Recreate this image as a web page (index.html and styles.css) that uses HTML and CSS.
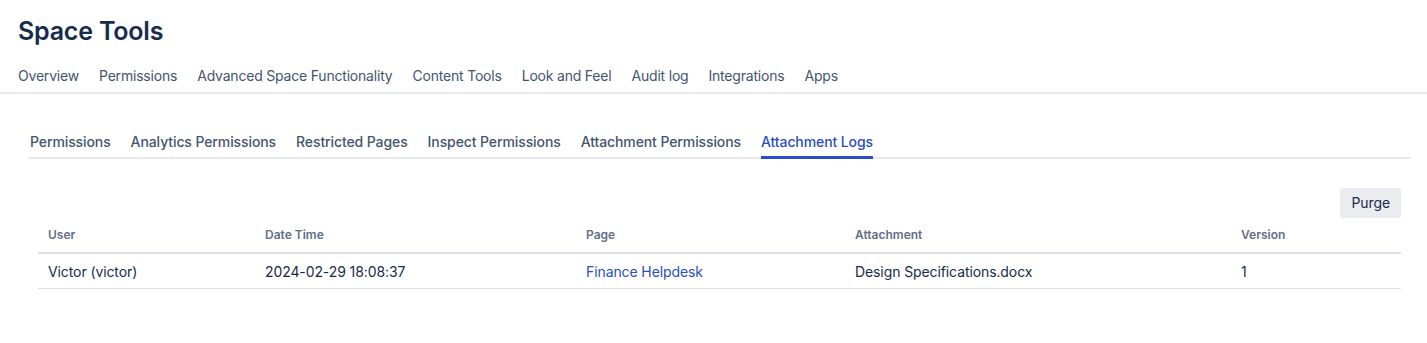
FILE: index.html
```html
<!DOCTYPE html>
<html>
<head>
<meta charset="utf-8">
<link rel="stylesheet" href="styles.css">
</head>
<body>
<header class="header">
  <h1 class="title">Space Tools</h1>
  <nav class="topnav">
    <a class="topnav-item">Overview</a>
    <a class="topnav-item">Permissions</a>
    <a class="topnav-item">Advanced Space Functionality</a>
    <a class="topnav-item">Content Tools</a>
    <a class="topnav-item">Look and Feel</a>
    <a class="topnav-item">Audit log</a>
    <a class="topnav-item">Integrations</a>
    <a class="topnav-item">Apps</a>
  </nav>
</header>
<main class="content">
  <div class="tabs">
    <a class="tab">Permissions</a>
    <a class="tab">Analytics Permissions</a>
    <a class="tab">Restricted Pages</a>
    <a class="tab">Inspect Permissions</a>
    <a class="tab">Attachment Permissions</a>
    <a class="tab active">Attachment Logs</a>
  </div>
  <section class="panel">
    <div class="actions">
      <button class="btn">Purge</button>
    </div>
    <table class="log-table">
      <thead>
        <tr>
          <th class="c-user">User</th>
          <th class="c-date">Date Time</th>
          <th class="c-page">Page</th>
          <th class="c-att">Attachment</th>
          <th class="c-ver">Version</th>
        </tr>
      </thead>
      <tbody>
        <tr>
          <td>Victor (victor)</td>
          <td>2024-02-29 18:08:37</td>
          <td><a class="link">Finance Helpdesk</a></td>
          <td>Design Specifications.docx</td>
          <td>1</td>
        </tr>
      </tbody>
    </table>
  </section>
</main>
</body>
</html>
```

FILE: styles.css
```css
* { box-sizing: border-box; }
html, body {
  margin: 0;
  padding: 0;
  background: #ffffff;
  font-family: Inter, "Noto Sans", "Liberation Sans", sans-serif;
  color: #172B4D;
}
.header {
  border-bottom: 2px solid #e8e9ed;
}
.title {
  margin: 0;
  padding: 14px 18px 0;
  font-size: 25px;
  line-height: 34px;
  font-weight: 600;
  color: #172B4D;
  letter-spacing: -0.2px;
}
.topnav {
  display: flex;
  gap: 20px;
  padding: 18px 18px 0;
  height: 44px;
}
.topnav-item {
  font-size: 14px;
  line-height: 20px;
  color: #44546F;
  letter-spacing: -0.2px;
}
.content {
  padding: 32px 16px 0 28px;
}
.tabs {
  display: flex;
  gap: 20px;
  border-bottom: 2px solid #e8e9ed;
  padding-left: 2px;
  height: 33px;
}
.tab {
  font-size: 14px;
  line-height: 20px;
  font-weight: 500;
  color: #44546F;
  letter-spacing: -0.1px;
  padding-top: 6px;
  height: 33px;
}
.tab.active {
  color: #2A4CC7;
  border-bottom: 3px solid #2A4CC7;
}
.panel {
  padding: 29px 10px 0 10px;
}
.actions {
  display: flex;
  justify-content: flex-end;
}
.btn {
  font-family: inherit;
  font-size: 14px;
  line-height: 20px;
  color: #172B4D;
  background: #EBECF0;
  border: none;
  border-radius: 3px;
  padding: 5px 11px;
  height: 30px;
  letter-spacing: -0.1px;
}
.log-table {
  width: 100%;
  border-collapse: collapse;
  table-layout: fixed;
  margin-top: 1px;
}
.log-table th {
  text-align: left;
  font-size: 12px;
  font-weight: 600;
  color: #626F86;
  padding: 8px 10px 9px;
  line-height: 16px;
  border-bottom: 2px solid #dcdfe4;
}
.log-table td {
  font-size: 14px;
  line-height: 20px;
  color: #172B4D;
  padding: 8px 10px 6px;
  border-bottom: 1px solid #dcdfe4;
  letter-spacing: -0.1px;
}
.c-user { width: 217px; }
.c-date { width: 321px; }
.c-page { width: 269px; }
.c-att { width: 386px; }
.c-ver { width: 170px; }
.link {
  color: #2A4CC7;
  text-decoration: none;
}
```
